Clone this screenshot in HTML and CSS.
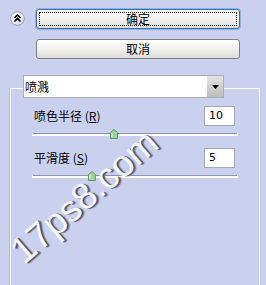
FILE: index.html
```html
<!DOCTYPE html>
<html>
<head>
<meta charset="utf-8">
<link rel="stylesheet" href="styles.css">
</head>
<body>
<div class="top">
  <div class="collapse">
    <svg width="15" height="15" viewBox="0 0 15 15">
      <defs>
        <linearGradient id="cg" x1="0" y1="0" x2="1" y2="1">
          <stop offset="0" stop-color="#ffffff"/>
          <stop offset="1" stop-color="#d6d6de"/>
        </linearGradient>
      </defs>
      <circle cx="7.5" cy="7.5" r="6.8" fill="url(#cg)" stroke="#9a9cb0" stroke-width="1"/>
      <path d="M4.5 7 L7.5 4 L10.5 7 M4.5 10.5 L7.5 7.5 L10.5 10.5" fill="none" stroke="#000" stroke-width="1.6"/>
    </svg>
  </div>
  <div class="btns">
    <div class="btn btn-default"><span class="focus">确定</span></div>
    <div class="btn">取消</div>
  </div>
</div>
<div class="group">
  <div class="group-head">
    <div class="select">
      <span class="select-text">喷溅</span>
      <span class="select-arrow">
        <svg width="7" height="4" viewBox="0 0 7 4"><path d="M0 0 H7 L3.5 4 Z" fill="#000"/></svg>
      </span>
    </div>
  </div>
  <div class="row">
    <span class="label">喷色半径 (<u>R</u>)</span>
    <span class="input">10</span>
  </div>
  <div class="slider">
    <div class="track"></div>
    <span class="thumb" style="left:78px">
      <svg width="8" height="10" viewBox="0 0 8 10"><path d="M0.5 3.5 L4 0.5 L7.5 3.5 V9.5 H0.5 Z" fill="#9fd39b" stroke="#5f9a5f" stroke-width="1"/><path d="M2 4 V8" stroke="#e6f7e4" stroke-width="1"/></svg>
    </span>
  </div>
  <div class="row">
    <span class="label">平滑度 (<u>S</u>)</span>
    <span class="input">5</span>
  </div>
  <div class="slider">
    <div class="track"></div>
    <span class="thumb" style="left:56px">
      <svg width="8" height="10" viewBox="0 0 8 10"><path d="M0.5 3.5 L4 0.5 L7.5 3.5 V9.5 H0.5 Z" fill="#9fd39b" stroke="#5f9a5f" stroke-width="1"/><path d="M2 4 V8" stroke="#e6f7e4" stroke-width="1"/></svg>
    </span>
  </div>
</div>
<span class="watermark">17ps8.com</span>
</body>
</html>
```
FILE: styles.css
```css
html, body {
  margin: 0;
  padding: 0;
  height: 100%;
  overflow: hidden;
}
body {
  background: #c9d1ef;
  font-family: "Noto Sans CJK SC", "DejaVu Sans", sans-serif;
  font-size: 12px;
  color: #000;
  position: relative;
}
.top {
  display: flex;
  padding: 9px 0 0 10px;
}
.collapse {
  width: 15px;
  height: 15px;
  margin-top: 2px;
  margin-right: 11px;
}
.collapse svg { display: block; }
.btns {
  display: flex;
  flex-direction: column;
  gap: 10px;
  width: 204px;
}
.btn {
  height: 20px;
  box-sizing: border-box;
  border: 1px solid #7d7f86;
  border-radius: 3px;
  background: linear-gradient(#ffffff 0%, #f2f2f0 45%, #dcdcd8 100%);
  display: flex;
  align-items: center;
  justify-content: center;
  line-height: 16px;
  font-size: 12px;
}
.btn-default {
  border-color: #3b6fae;
  box-shadow: 0 0 0 1px #8cb4e4;
  padding: 2px;
}
.btn-default .focus {
  flex: 1;
  align-self: stretch;
  border: 1px dotted #000;
  display: flex;
  align-items: center;
  justify-content: center;
}
.group {
  margin: 29px 0 0 10px;
  width: 250px;
  height: 197px;
  box-sizing: border-box;
  border: 1px solid #ffffff;
  border-bottom: none;
  box-shadow: -1px 0 0 #b8c0de;
}
.group-head {
  margin: -14px 0 0 12px;
}
.select {
  width: 201px;
  height: 23px;
  box-sizing: border-box;
  background: #fff;
  border: 1px solid #a8aebf;
  display: flex;
  align-items: center;
}
.select-text {
  flex: 1;
  padding-left: 1px;
  line-height: 16px;
}
.select-arrow {
  width: 16px;
  height: 21px;
  background: linear-gradient(#e4e4e4, #bdbdbd);
  display: flex;
  align-items: center;
  justify-content: center;
}
.select-arrow svg { display: block; }
.row {
  display: flex;
  justify-content: space-between;
  align-items: center;
  margin: 8px 24px 0 23px;
  height: 20px;
}
.label {
  line-height: 16px;
}
.label u {
  text-decoration: underline;
}
.input {
  width: 31px;
  height: 20px;
  box-sizing: border-box;
  background: #fff;
  border: 1px solid #a4a9b8;
  padding-left: 4px;
  line-height: 18px;
  font-family: "DejaVu Sans", sans-serif;
  font-size: 11px;
}
.slider {
  position: relative;
  height: 12px;
  margin: 2px 21px 0 21px;
}
.track {
  position: absolute;
  left: 0;
  right: 0;
  top: 5px;
  height: 1px;
  background: #8d93a8;
  border-bottom: 2px solid #ffffff;
  border-left: 1px solid #fff;
  border-right: 1px solid #fff;
}
.thumb {
  position: absolute;
  top: 1px;
}
.thumb svg { display: block; }
.watermark {
  position: absolute;
  left: 30px;
  top: 230px;
  font-family: "Liberation Sans", Arial, sans-serif;
  font-size: 37px;
  color: #f4f6fb;
  transform: rotate(-41deg);
  transform-origin: 0 100%;
  text-shadow: 1px 1px 0 #4a4f60, 2px 2px 1px #6a6f80;
  white-space: nowrap;
}
```
